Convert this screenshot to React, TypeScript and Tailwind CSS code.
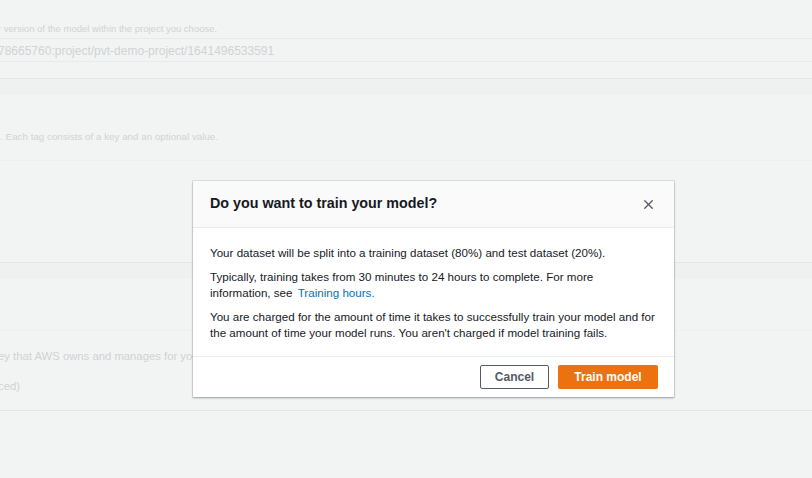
import { X } from 'lucide-react';

const Backdrop: React.FC = () => {
  return (
    <div className="flex flex-col text-[#cfd3d3]">
      <div className="h-[38px] flex items-end pb-[2px] text-[9.5px] -ml-[2px] whitespace-nowrap">
        r version of the model within the project you choose.
      </div>
      <div className="h-[23px] border-t border-[#e8eaea] flex items-center pt-[1px] text-[12px] -ml-[2px] whitespace-nowrap">
        78665760:project/pvt-demo-project/1641496533591
      </div>
      <div className="h-[17px] border-t border-[#e8eaea]"></div>
      <div className="h-[17px] border-t border-[#e4e6e6] bg-[#eff0f0]"></div>
      <div className="h-[65px] flex items-end pb-[15px] text-[9.8px] -ml-[2px] whitespace-nowrap">
        l. Each tag consists of a key and an optional value.
      </div>
      <div className="h-[102px] border-t border-[#eeefef]"></div>
      <div className="h-[17px] border-t border-[#e4e6e6] bg-[#eff0f0]"></div>
      <div className="h-[51px]"></div>
      <div className="border-t border-[#eeefef] pt-[17px] flex flex-col gap-[14px] text-[11.3px] whitespace-nowrap">
        <div className="h-[16px] -ml-[2px]">ey that AWS owns and manages for you</div>
        <div className="h-[16px] -ml-[2px]">ced)</div>
      </div>
      <div className="h-[16px]"></div>
      <div className="h-[68px] border-t border-[#e4e6e6]"></div>
    </div>
  );
};

const TrainDialog: React.FC = () => {
  return (
    <div className="absolute left-[193px] top-[181px] w-[481px] bg-white shadow-[0_1px_2px_rgba(0,28,36,0.35),0_0_0_1px_rgba(0,28,36,0.08)]">
      <div className="h-[47px] bg-[#fafafa] border-b border-[#eaeded] flex items-center justify-between pl-[17px] pr-[18px]">
        <h2 className="text-[14.3px] font-bold text-[#16191f]">Do you want to train your model?</h2>
        <X className="w-[15px] h-[15px] text-[#545b64]" strokeWidth={2.2} />
      </div>
      <div className="px-[17px] pt-[17px] pb-[15px] text-[11.6px] leading-[16px] text-[#16191f] flex flex-col gap-[8px]">
        <p>Your dataset will be split into a training dataset (80%) and test dataset (20%).</p>
        <p>
          Typically, training takes from 30 minutes to 24 hours to complete. For more
          <br />
          information, see <span className="text-[#0073bb] ml-[2px]">Training hours.</span>
        </p>
        <p>
          You are charged for the amount of time it takes to successfully train your model and for the amount of time
          your model runs. You aren't charged if model training fails.
        </p>
      </div>
      <div className="border-t border-[#eaeded] flex justify-end gap-[9px] pt-[8px] pb-[8px] pr-[16px]">
        <button className="h-[24px] w-[69px] border border-[#545b64] rounded-[2px] text-[12px] font-bold text-[#545b64]">
          Cancel
        </button>
        <button className="h-[24px] w-[100px] bg-[#ec7211] rounded-[2px] text-[12px] font-bold text-white">
          Train model
        </button>
      </div>
    </div>
  );
};

export default function App() {
  return (
    <div
      className="relative w-[812px] h-[478px] overflow-hidden bg-[#f2f3f3]"
      style={{ fontFamily: '"Liberation Sans", Arial, sans-serif' }}
    >
      <Backdrop />
      <TrainDialog />
    </div>
  );
}
